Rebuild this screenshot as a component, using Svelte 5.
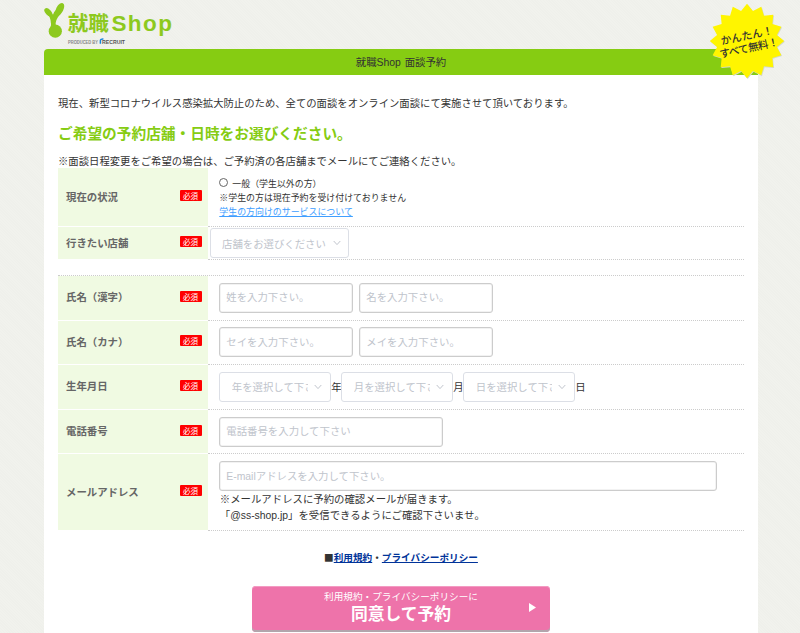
<script lang="ts">
    const nameRows = [
        { label: "氏名（漢字）", fields: ["姓を入力下さい。", "名を入力下さい。"] },
        { label: "氏名（カナ）", fields: ["セイを入力下さい。", "メイを入力下さい。"] }
    ];

    const birthSelects = ["年", "月", "日"];

    function starPoints(count: number, outer: number, inner: number) {
        const points = [];
        for (let i = 0; i < count * 2; i++) {
            const r = i % 2 === 0 ? outer : inner;
            const angle = (Math.PI * i) / count - Math.PI / 2;
            points.push(`${(r * Math.cos(angle)).toFixed(2)},${(r * Math.sin(angle)).toFixed(2)}`);
        }
        return points.join(" ");
    }

    const badgePoints = starPoints(16, 37.2, 30.5);
</script>

{#snippet head(label: string)}
    <div class="head">
        <span class="label">{label}</span>
        <span class="required">必須</span>
    </div>
{/snippet}

{#snippet dropdown(text: string, wide: boolean)}
    <button type="button" class="dropdown" class:wide>
        <span class="dropdown-text">{text}</span>
        <svg width="8" height="6" viewBox="0 0 8 6">
            <path d="M0.7 1 L4 4.6 L7.3 1" fill="none" stroke="#c0c4cc" stroke-width="1" />
        </svg>
    </button>
{/snippet}

<div class="page">
    <header>
        <svg class="logo" width="140" height="48" viewBox="0 0 140 48">
            <g fill="#8dc91e">
                <circle cx="11.3" cy="31.2" r="6.6" />
                <ellipse cx="4.3" cy="12.2" rx="2.8" ry="4.9" transform="rotate(-44 4.3 12.2)" />
                <ellipse cx="15.8" cy="9.2" rx="3.6" ry="6.8" transform="rotate(27 15.8 9.2)" />
                <path d="M3.4 14 Q7.8 18.5 6.8 28 L11.8 26 Q10.6 20 17 13.5 L12.4 9.5 Q9.5 12 9 14.8 Q7.8 13.5 6.2 11.8 Z" />
            </g>
            <text class="logo-kanji" x="23.7" y="30.5" textLength="41" lengthAdjust="spacingAndGlyphs">就職</text>
            <text class="logo-latin" x="67.4" y="31.4" textLength="60.5">Shop</text>
            <text class="logo-small" x="24" y="43.6" textLength="30" lengthAdjust="spacingAndGlyphs">PRODUCED BY</text>
            <path d="M56.4 43.8 V40.6 Q56.4 38.8 59.4 39" fill="none" stroke="#1685dc" stroke-width="1.5" />
            <text class="logo-recruit" x="58" y="43.6" textLength="23" lengthAdjust="spacingAndGlyphs">RECRUIT</text>
        </svg>
        <svg class="badge" width="78" height="78" viewBox="-39 -39 78 78">
            <polygon points={badgePoints} fill="#d3d8cc" transform="translate(0.7 0.8)" />
            <polygon points={badgePoints} fill="#fff500" />
            <g transform="rotate(-12)">
                <text x="1" y="-1.5" textLength="53">かんたん！</text>
                <text x="0.5" y="11" textLength="60">すべて無料！</text>
            </g>
        </svg>
    </header>

    <h1>就職Shop 面談予約</h1>

    <main>
        <p>現在、新型コロナウイルス感染拡大防止のため、全ての面談をオンライン面談にて実施させて頂いております。</p>
        <h2>ご希望の予約店舗・日時をお選びください。</h2>
        <p>※面談日程変更をご希望の場合は、ご予約済の各店舗までメールにてご連絡ください。</p>

        <div class="table shop-table">
            <div class="row status-row">
                {@render head("現在の状況")}
                <div class="cell status">
                    <label><span class="radio"></span>一般（学生以外の方）</label>
                    <span>※学生の方は現在予約を受け付けておりません</span>
                    <a href="#student">学生の方向けのサービスについて</a>
                </div>
            </div>
            <div class="row shop-row">
                {@render head("行きたい店舗")}
                <div class="cell tight">
                    {@render dropdown("店舗をお選びください", true)}
                </div>
            </div>
        </div>

        <div class="table user-table">
            {#each nameRows as row}
                <div class="row">
                    {@render head(row.label)}
                    <div class="cell names">
                        {#each row.fields as field}
                            <input type="text" placeholder={field} />
                        {/each}
                    </div>
                </div>
            {/each}
            <div class="row">
                {@render head("生年月日")}
                <div class="cell">
                    {#each birthSelects as unit}
                        {@render dropdown(`${unit}を選択して下さい`, false)}
                        <span class="unit">{unit}</span>
                    {/each}
                </div>
            </div>
            <div class="row">
                {@render head("電話番号")}
                <div class="cell">
                    <input class="tel" type="text" placeholder="電話番号を入力して下さい" />
                </div>
            </div>
            <div class="row mail-row">
                {@render head("メールアドレス")}
                <div class="cell mail">
                    <input type="text" placeholder="E-mailアドレスを入力して下さい。" />
                    <span>※メールアドレスに予約の確認メールが届きます。</span>
                    <span>「@ss-shop.jp」を受信できるようにご確認下さいませ。</span>
                </div>
            </div>
        </div>

        <div class="terms"><span class="mark">■</span><a href="#terms">利用規約</a>・<a href="#privacy">プライバシーポリシー</a></div>

        <button type="button" class="submit">
            <span class="submit-note">利用規約・プライバシーポリシーに</span>
            <span class="submit-main">同意して予約</span>
            <svg class="arrow" width="7" height="9" viewBox="0 0 7 9"><path d="M0 0 L7 4.5 L0 9 Z" fill="#fff" /></svg>
        </button>
    </main>
</div>

<style>
    :global(body) {
        margin: 0;
        overflow: hidden;
    }

    .page {
        box-sizing: border-box;
        height: 633px;
        padding: 0 42px 0 44px;
        overflow: hidden;
        background: repeating-linear-gradient(45deg, #f1f2ed 0 1px, #eff0eb 1px 2px);
        font-family: "Liberation Sans", "Noto Sans CJK JP", sans-serif;
        font-size: 10.4px;
        color: #333;
    }

    button, input {
        box-sizing: border-box;
        font: inherit;
    }

    header {
        position: relative;
        height: 49px;
    }

    .logo {
        display: block;
    }

    .logo-kanji {
        font: bold 20px "Noto Sans CJK JP", sans-serif;
        fill: #8dc91e;
    }

    .logo-latin {
        font: bold 22.5px "Liberation Sans", sans-serif;
        fill: #8dc91e;
    }

    .logo-small {
        font: bold 4.5px "Liberation Sans", sans-serif;
        fill: #888;
    }

    .logo-recruit {
        font: bold 5.5px "Liberation Sans", sans-serif;
        fill: #555;
    }

    .badge {
        position: absolute;
        top: 2.3px;
        right: -28px;
    }

    .badge text {
        font: 500 10.6px "Noto Sans CJK JP", sans-serif;
        fill: #333;
        text-anchor: middle;
    }

    h1 {
        height: 26px;
        margin: 0;
        border-radius: 4px 4px 0 0;
        background: #86cc12;
        font-size: 10.4px;
        font-weight: normal;
        line-height: 27px;
        text-align: center;
        word-spacing: 1px;
    }

    main {
        height: 558px;
        padding: 20px 14px 0;
        box-sizing: border-box;
        background: #fff;
    }

    p {
        margin: 0;
        font-size: 10.35px;
        line-height: 17px;
        white-space: nowrap;
    }

    h2 {
        margin: 12px 0 9px;
        color: #86cc12;
        font-size: 14.7px;
        line-height: 20px;
    }

    .table {
        display: flex;
        flex-direction: column;
    }

    .shop-table {
        margin-top: -2px;
    }

    .user-table {
        margin-top: 15px;
        border-top: 1px dotted #ccc;
    }

    .row {
        display: grid;
        grid-template-columns: 150px 1fr;
        height: 44.6px;
    }

    .status-row {
        height: 59px;
    }

    .shop-row {
        height: 33px;
    }

    .mail-row {
        height: 76.6px;
    }

    .head {
        display: flex;
        align-items: center;
        justify-content: space-between;
        padding: 0 6.5px 0 8px;
        border-bottom: 1px solid #fff;
        background: #f0fae2;
    }

    .label {
        margin-top: -2px;
        color: #666;
        font-weight: bold;
    }

    .required {
        width: 22px;
        height: 11px;
        margin-top: -3px;
        border-radius: 1px;
        background: #f00;
        color: #fff;
        font-size: 7.5px;
        line-height: 13px;
        text-align: center;
    }

    .cell {
        display: flex;
        align-items: center;
        min-width: 0;
        padding: 0 11.3px;
        border-bottom: 1px dotted #ccc;
    }

    .cell.tight {
        padding: 0 2px;
    }

    .status {
        flex-direction: column;
        align-items: flex-start;
        justify-content: center;
        padding-top: 1px;
        font-size: 8.93px;
        line-height: 14px;
    }

    .status label {
        display: flex;
        align-items: center;
    }

    .status a {
        color: #409eff;
    }

    .radio {
        box-sizing: border-box;
        width: 9px;
        height: 9px;
        margin: -2px 4px 0 0;
        border: 1px solid #666;
        border-radius: 50%;
    }

    input {
        width: 134px;
        height: 30px;
        padding: 0 6px;
        border: 1px solid #ccc;
        border-radius: 3px;
        box-shadow: inset 0 0 0 0.5px #e6e6e6;
        background: #fff;
    }

    input::placeholder {
        color: #c0c4cc;
        opacity: 1;
    }

    .names {
        gap: 6px;
    }

    .tel {
        width: 223.5px;
    }

    .dropdown {
        display: flex;
        flex: none;
        align-items: center;
        justify-content: space-between;
        width: 112px;
        height: 30px;
        padding: 0 8px 0 11.5px;
        border: 1px solid #dcdfe6;
        border-radius: 3px;
        background: #fff;
        color: #c0c4cc;
    }

    .dropdown.wide {
        width: 139px;
        padding: 0 7px 0 11px;
    }

    .dropdown-text {
        width: 76px;
        overflow: hidden;
        text-align: left;
        white-space: nowrap;
    }

    .wide .dropdown-text {
        width: auto;
    }

    .unit {
        width: 10px;
    }

    .mail {
        flex-direction: column;
        align-items: flex-start;
        line-height: 16px;
        padding-top: 7px;
    }

    .mail input {
        width: 497.5px;
        margin-bottom: 1px;
    }

    .mail span {
        padding-left: 0.5px;
    }

    .terms {
        height: 16px;
        margin-top: 18.5px;
        font-size: 9.65px;
        font-weight: bold;
        line-height: 16px;
        text-align: center;
    }

    .mark {
        font-family: "Noto Sans CJK JP", sans-serif;
    }

    .terms a {
        color: #039;
    }

    .submit {
        position: relative;
        display: flex;
        flex-direction: column;
        align-items: center;
        width: 298px;
        height: 46px;
        margin: 21px auto 0;
        padding: 3px 0 0;
        border: 0;
        border-radius: 4px;
        background: #ee73aa;
        box-shadow: inset 0 1px #f39bc2, inset 0 -2px #b3a5ac;
        color: #fff;
    }

    .submit-note {
        font-size: 9.65px;
        line-height: 16px;
    }

    .submit-main {
        font-size: 16.8px;
        font-weight: bold;
        line-height: 19px;
    }

    .arrow {
        position: absolute;
        top: 17px;
        right: 14px;
    }
</style>
